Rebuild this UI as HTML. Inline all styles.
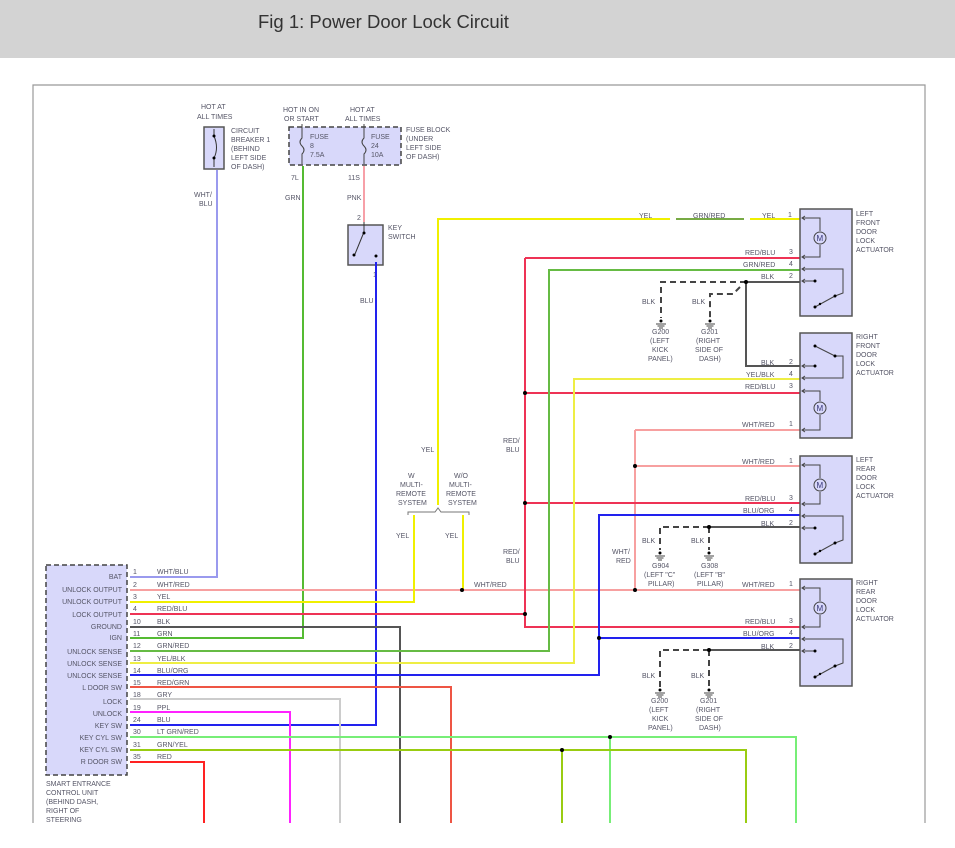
<!DOCTYPE html>
<html><head><meta charset="utf-8"><style>
html,body{margin:0;padding:0;background:#fff;width:955px;height:848px;overflow:hidden}
.hd{position:absolute;left:0;top:0;width:955px;height:58px;background:#d3d3d3}
.hd span{position:absolute;left:258px;top:11px;font:18.5px "Liberation Sans",sans-serif;color:#333}
svg{position:absolute;left:0;top:0}
text{font-family:"Liberation Sans",sans-serif;font-size:7px;fill:#556}
.w{fill:none;stroke-width:2}
</style></head><body>
<div class="hd"><span>Fig 1: Power Door Lock Circuit</span></div>
<svg width="955" height="848" viewBox="0 0 955 848">
<defs>
<g id="act">
<rect x="0" y="0" width="52" height="107" fill="#d8d8fa" stroke="#555" stroke-width="1.5"/>
<path d="M2,9H20V22M20,36V48H2M2,60H43V84L35,87M2,72H15" fill="none" stroke="#444" stroke-width="1"/>
<circle cx="20" cy="29" r="6" fill="#d8d8fa" stroke="#444"/><text x="16.5" y="32" style="font-size:8px;fill:#337">M</text>
<line x1="35" y1="87" x2="15" y2="98" stroke="#444"/>
<circle cx="35" cy="87" r="1.5" fill="#000"/><circle cx="15" cy="98" r="1.5" fill="#000"/><circle cx="20" cy="95" r="1.2" fill="#000"/><circle cx="15" cy="72" r="1.5" fill="#000"/>
<path d="M5,7L2,9L5,11M5,46L2,48L5,50M5,58L2,60L5,62M5,70L2,72L5,74" fill="none" stroke="#444"/>
</g>
<g id="gnd"><circle cx="0" cy="0" r="1.5" fill="#000"/><path d="M-5,3H5M-3.5,5H3.5M-2,7H2" stroke="#444"/></g>
</defs>
<path d="M33,823V85H925V823" fill="none" stroke="#999" stroke-width="1.2"/>

<text x="201" y="109">HOT AT</text><text x="197" y="119">ALL TIMES</text>
<rect x="204" y="127" width="20" height="42" fill="#d8d8fa" stroke="#555" stroke-width="1.5"/>
<path d="M214,129V136Q219,148 214,158V167" fill="none" stroke="#333"/>
<circle cx="214" cy="136" r="1.5"/><circle cx="214" cy="158" r="1.5"/>
<text x="231" y="133">CIRCUIT</text><text x="231" y="142">BREAKER 1</text><text x="231" y="151">(BEHIND</text><text x="231" y="160">LEFT SIDE</text><text x="231" y="169">OF DASH)</text>
<text x="283" y="112">HOT IN ON</text><text x="284" y="121">OR START</text>
<text x="350" y="112">HOT AT</text><text x="345" y="121">ALL TIMES</text>
<rect x="289" y="127" width="112" height="38" fill="#d8d8fa" stroke="#444" stroke-width="1.5" stroke-dasharray="5,3"/>
<path d="M302,124V138Q298,142 302,146Q306,150 302,154V164M364,124V138Q360,142 364,146Q368,150 364,154V164" fill="none" stroke="#444"/>
<text x="310" y="139">FUSE</text><text x="310" y="148">8</text><text x="310" y="157">7.5A</text>
<text x="371" y="139">FUSE</text><text x="371" y="148">24</text><text x="371" y="157">10A</text>
<text x="406" y="132">FUSE BLOCK</text><text x="406" y="141">(UNDER</text><text x="406" y="150">LEFT SIDE</text><text x="406" y="159">OF DASH)</text>
<text x="291" y="180">7L</text><text x="348" y="180">11S</text>
<text x="194" y="197">WHT/</text><text x="199" y="206">BLU</text>
<text x="285" y="200">GRN</text><text x="347" y="200">PNK</text>
<text x="357" y="220">2</text>
<rect x="348" y="225" width="35" height="40" fill="#d8d8fa" stroke="#555" stroke-width="1.5"/>
<path d="M364,222V232L355,254" fill="none" stroke="#333"/><circle cx="364" cy="233" r="1.5"/><circle cx="354" cy="255" r="1.5"/><circle cx="376" cy="256" r="1.5"/>
<text x="388" y="230">KEY</text><text x="388" y="239">SWITCH</text>
<text x="373" y="277">1</text><text x="360" y="303">BLU</text>

<path class="w" stroke="#9a9aee" d="M130,577H217V170"/>
<path class="w" stroke="#55bb33" d="M130,638H303V166"/>
<path class="w" stroke="#f7a0a8" d="M364,166V222"/>
<path class="w" stroke="#2222ee" d="M130,725H376V262"/>
<path class="w" stroke="#f7a0a0" d="M130,590H800M635,430H800M635,430V590M635,466H800"/>
<path class="w" stroke="#f0f000" d="M130,602H414V515M463,515V590M438,505V219H670M750,219H800"/>
<path class="w" stroke="#77aa44" d="M676,219H744"/>
<path class="w" stroke="#ee3355" d="M130,614H525M525,258V627H800M525,258H800M525,393H800M525,503H800"/>
<path class="w" stroke="#555" d="M130,627H400V823"/>
<path class="w" stroke="#66bb44" d="M130,651H549V270H800"/>
<path class="w" stroke="#eeee44" d="M130,663H574V379H800"/>
<path class="w" stroke="#2222ee" d="M130,675H599V515H800M599,638H800"/>
<path class="w" stroke="#ee5544" d="M130,687H451V823"/>
<path class="w" stroke="#ccc" d="M130,699H340V823"/>
<path class="w" stroke="#ff22ff" d="M130,712H290V823"/>
<path class="w" stroke="#77ee77" d="M130,737H796V823M610,737V823"/>
<path class="w" stroke="#99cc11" d="M130,750H746V823M562,750V823"/>
<path class="w" stroke="#ff2222" d="M130,762H204V823"/>
<path class="w" stroke="#555" d="M800,282H746V366H800M800,527H709M800,650H709"/>
<path fill="none" stroke="#444" stroke-width="2" stroke-dasharray="6,4" d="M746,282H661V318M740,287L733,294H710V318M709,527H660V550M709,527V550M709,650H660V688M709,650V688"/>
<g fill="#000"><circle cx="746" cy="282" r="2"/><circle cx="525" cy="393" r="2"/><circle cx="525" cy="503" r="2"/><circle cx="525" cy="614" r="2"/><circle cx="635" cy="466" r="2"/><circle cx="635" cy="590" r="2"/><circle cx="462" cy="590" r="2"/><circle cx="709" cy="527" r="2"/><circle cx="709" cy="650" r="2"/><circle cx="599" cy="638" r="2"/><circle cx="610" cy="737" r="2"/><circle cx="562" cy="750" r="2"/></g>
<use href="#gnd" x="661" y="321"/><use href="#gnd" x="710" y="321"/><use href="#gnd" x="660" y="553"/><use href="#gnd" x="709" y="553"/><use href="#gnd" x="660" y="690"/><use href="#gnd" x="709" y="690"/>

<path d="M408,515V512H435L438,508L441,512H469V515" fill="none" stroke="#777"/>
<text x="408" y="478">W</text><text x="400" y="487">MULTI-</text><text x="396" y="496">REMOTE</text><text x="398" y="505">SYSTEM</text>
<text x="454" y="478">W/O</text><text x="449" y="487">MULTI-</text><text x="446" y="496">REMOTE</text><text x="448" y="505">SYSTEM</text>
<text x="421" y="452">YEL</text><text x="396" y="538">YEL</text><text x="445" y="538">YEL</text>
<text x="503" y="443">RED/</text><text x="506" y="452">BLU</text>
<text x="503" y="554">RED/</text><text x="506" y="563">BLU</text>
<text x="612" y="554">WHT/</text><text x="616" y="563">RED</text>
<text x="474" y="587">WHT/RED</text>

<text x="639" y="218">YEL</text><text x="693" y="218">GRN/RED</text><text x="762" y="218">YEL</text><text x="788" y="217">1</text>
<text x="745" y="255">RED/BLU</text><text x="789" y="254">3</text>
<text x="743" y="267">GRN/RED</text><text x="789" y="266">4</text>
<text x="761" y="279">BLK</text><text x="789" y="278">2</text>
<text x="642" y="304">BLK</text><text x="692" y="304">BLK</text>
<text x="652" y="334">G200</text><text x="650" y="343">(LEFT</text><text x="652" y="352">KICK</text><text x="648" y="361">PANEL)</text>
<text x="701" y="334">G201</text><text x="696" y="343">(RIGHT</text><text x="695" y="352">SIDE OF</text><text x="699" y="361">DASH)</text>
<text x="761" y="365">BLK</text><text x="789" y="364">2</text>
<text x="746" y="377">YEL/BLK</text><text x="789" y="376">4</text>
<text x="745" y="389">RED/BLU</text><text x="789" y="388">3</text>
<text x="742" y="427">WHT/RED</text><text x="789" y="426">1</text>
<text x="742" y="464">WHT/RED</text><text x="789" y="463">1</text>
<text x="745" y="501">RED/BLU</text><text x="789" y="500">3</text>
<text x="743" y="513">BLU/ORG</text><text x="789" y="512">4</text>
<text x="761" y="526">BLK</text><text x="789" y="525">2</text>
<text x="642" y="543">BLK</text><text x="691" y="543">BLK</text>
<text x="652" y="568">G904</text><text x="644" y="577">(LEFT "C"</text><text x="648" y="586">PILLAR)</text>
<text x="701" y="568">G308</text><text x="694" y="577">(LEFT "B"</text><text x="697" y="586">PILLAR)</text>
<text x="742" y="587">WHT/RED</text><text x="789" y="586">1</text>
<text x="745" y="624">RED/BLU</text><text x="789" y="623">3</text>
<text x="743" y="636">BLU/ORG</text><text x="789" y="635">4</text>
<text x="761" y="649">BLK</text><text x="789" y="648">2</text>
<text x="642" y="678">BLK</text><text x="691" y="678">BLK</text>
<text x="651" y="703">G200</text><text x="649" y="712">(LEFT</text><text x="652" y="721">KICK</text><text x="648" y="730">PANEL)</text>
<text x="700" y="703">G201</text><text x="696" y="712">(RIGHT</text><text x="695" y="721">SIDE OF</text><text x="699" y="730">DASH)</text>

<use href="#act" x="800" y="209"/>
<use href="#act" x="800" y="456"/>
<use href="#act" x="800" y="579"/>
<g transform="translate(800,333)">
<rect x="0" y="0" width="52" height="105" fill="#d8d8fa" stroke="#555" stroke-width="1.5"/>
<path d="M2,33H15M2,45H43V23H35M2,58H20V68M20,82V97H2" fill="none" stroke="#444"/>
<line x1="15" y1="13" x2="35" y2="23" stroke="#444"/>
<circle cx="15" cy="13" r="1.5"/><circle cx="35" cy="23" r="1.5"/><circle cx="15" cy="33" r="1.5"/>
<circle cx="20" cy="75" r="6" fill="#d8d8fa" stroke="#444"/><text x="16.5" y="78" style="font-size:8px;fill:#337">M</text>
<path d="M5,31L2,33L5,35M5,43L2,45L5,47M5,56L2,58L5,60M5,95L2,97L5,99" fill="none" stroke="#444"/>
</g>
<g>
<text x="856" y="216">LEFT</text><text x="856" y="225">FRONT</text><text x="856" y="234">DOOR</text><text x="856" y="243">LOCK</text><text x="856" y="252">ACTUATOR</text>
<text x="856" y="339">RIGHT</text><text x="856" y="348">FRONT</text><text x="856" y="357">DOOR</text><text x="856" y="366">LOCK</text><text x="856" y="375">ACTUATOR</text>
<text x="856" y="462">LEFT</text><text x="856" y="471">REAR</text><text x="856" y="480">DOOR</text><text x="856" y="489">LOCK</text><text x="856" y="498">ACTUATOR</text>
<text x="856" y="585">RIGHT</text><text x="856" y="594">REAR</text><text x="856" y="603">DOOR</text><text x="856" y="612">LOCK</text><text x="856" y="621">ACTUATOR</text>
</g>

<rect x="46" y="565" width="81" height="210" fill="#d8d8fa" stroke="#444" stroke-width="1.5" stroke-dasharray="5,3"/>
<g text-anchor="end">
<text x="122" y="579">BAT</text><text x="122" y="592">UNLOCK OUTPUT</text><text x="122" y="604">UNLOCK OUTPUT</text><text x="122" y="617">LOCK OUTPUT</text><text x="122" y="629">GROUND</text><text x="122" y="640">IGN</text><text x="122" y="654">UNLOCK SENSE</text><text x="122" y="666">UNLOCK SENSE</text><text x="122" y="678">UNLOCK SENSE</text><text x="122" y="690">L DOOR SW</text><text x="122" y="704">LOCK</text><text x="122" y="716">UNLOCK</text><text x="122" y="728">KEY SW</text><text x="122" y="740">KEY CYL SW</text><text x="122" y="752">KEY CYL SW</text><text x="122" y="764">R DOOR SW</text>
</g>
<g>
<text x="133" y="574">1</text><text x="157" y="574">WHT/BLU</text>
<text x="133" y="587">2</text><text x="157" y="587">WHT/RED</text>
<text x="133" y="599">3</text><text x="157" y="599">YEL</text>
<text x="133" y="611">4</text><text x="157" y="611">RED/BLU</text>
<text x="133" y="624">10</text><text x="157" y="624">BLK</text>
<text x="133" y="636">11</text><text x="157" y="636">GRN</text>
<text x="133" y="648">12</text><text x="157" y="648">GRN/RED</text>
<text x="133" y="661">13</text><text x="157" y="661">YEL/BLK</text>
<text x="133" y="673">14</text><text x="157" y="673">BLU/ORG</text>
<text x="133" y="685">15</text><text x="157" y="685">RED/GRN</text>
<text x="133" y="697">18</text><text x="157" y="697">GRY</text>
<text x="133" y="710">19</text><text x="157" y="710">PPL</text>
<text x="133" y="722">24</text><text x="157" y="722">BLU</text>
<text x="133" y="734">30</text><text x="157" y="734">LT GRN/RED</text>
<text x="133" y="747">31</text><text x="157" y="747">GRN/YEL</text>
<text x="133" y="759">35</text><text x="157" y="759">RED</text>
</g>
<text x="46" y="786">SMART ENTRANCE</text><text x="46" y="795">CONTROL UNIT</text><text x="46" y="804">(BEHIND DASH,</text><text x="46" y="813">RIGHT OF</text><text x="46" y="822">STEERING</text>
</svg>
</body></html>
